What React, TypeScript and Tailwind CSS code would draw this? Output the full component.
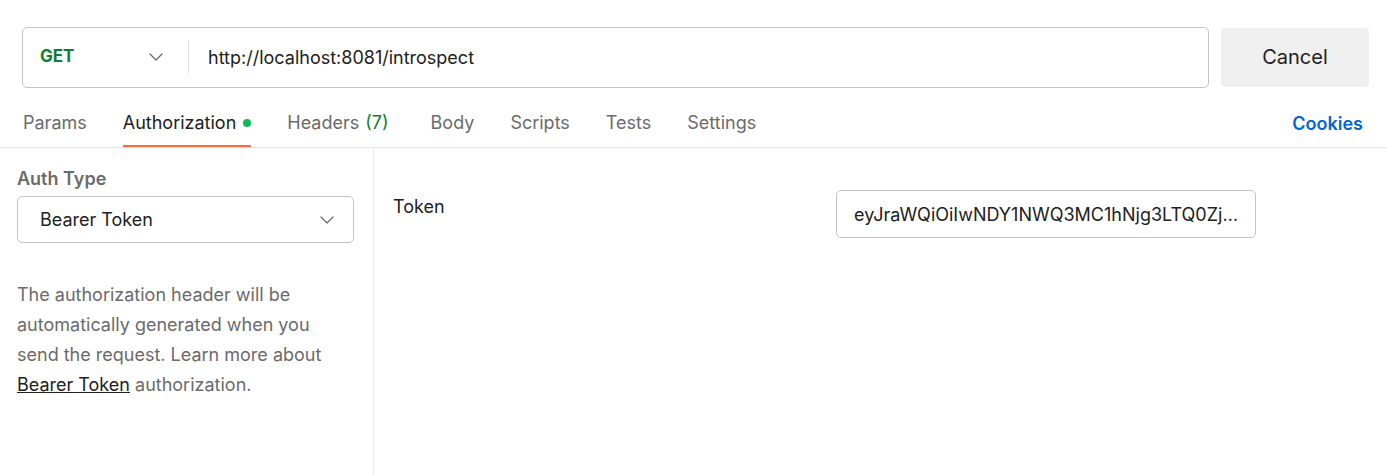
import React from "react";

const Chevron = ({ className = "" }: { className?: string }) => (
  <svg width="14" height="8" viewBox="0 0 14 8" fill="none" className={className}>
    <path d="M1 1l6 6 6-6" stroke="#6b6b6b" strokeWidth="1.3" strokeLinecap="round" strokeLinejoin="round" />
  </svg>
);

export default function App() {
  const tabs = ["Params", "Authorization", "Headers", "Body", "Scripts", "Tests", "Settings"];
  return (
    <div className="w-[1387px] h-[475px] bg-white flex flex-col overflow-hidden" style={{ fontFamily: "Inter, 'Noto Sans', sans-serif" }}>
      <div className="flex items-center gap-[12px] pl-[22px] pr-[18px] pt-[26px] h-[88px]">
        <div className="flex items-center w-[1187px] h-[61px] border border-[#c4c4c4] rounded-[5px] shrink-0">
          <div className="flex items-center justify-between w-[165px] pl-[17px] pr-[25px] h-full">
            <span className="text-[17px] font-bold text-[#0b7f35]">GET</span>
            <Chevron />
          </div>
          <div className="w-px h-[34px] bg-[#e2e2e2]" />
          <div className="pl-[19px] text-[18px] text-[#212121]">http://localhost:8081/introspect</div>
        </div>
        <button className="w-[148px] h-[59px] bg-[#f0f0f0] rounded-[4px] text-[20px] text-[#212121] flex items-center justify-center">
          Cancel
        </button>
      </div>
      <div className="flex items-stretch h-[60px] border-b border-[#e6e6e6] pl-[23px] pr-[24px]">
        <div className="flex items-stretch gap-[36px]">
          {tabs.map((t) => (
            <div
              key={t}
              className={`flex items-center text-[18px] pt-[12px] ${t === "Authorization" ? "text-[#212121] border-b-2 border-[#ff6c37]" : "text-[#6b6b6b] border-b-2 border-transparent"} ${t === "Headers" ? "mr-[6px]" : ""}`}
            >
              {t}
              {t === "Authorization" && <span className="ml-[7px] w-[8px] h-[8px] rounded-full bg-[#0cbb52] inline-block" />}
              {t === "Headers" && <span className="ml-[6px] text-[#0b7f35]">(7)</span>}
            </div>
          ))}
        </div>
        <div className="ml-auto flex items-center text-[18px] font-semibold text-[#0265d2] pt-[12px]">Cookies</div>
      </div>
      <div className="flex flex-1">
        <div className="w-[374px] border-r border-[#ececec] pl-[17px] pr-[19px] pt-[19px] shrink-0">
          <div className="text-[18px] font-semibold text-[#6b6b6b] leading-[24px]">Auth Type</div>
          <div className="mt-[5px] h-[47px] border border-[#c4c4c4] rounded-[5px] flex items-center justify-between pl-[22px] pr-[19px]">
            <span className="text-[18px] text-[#212121]">Bearer Token</span>
            <Chevron />
          </div>
          <p className="mt-[37px] text-[18px] leading-[30px] text-[#6b6b6b]">
            The authorization header will be automatically generated when you send the request. Learn more about{" "}
            <span className="underline text-[#212121]">Bearer Token</span> authorization.
          </p>
        </div>
        <div className="flex-1 pl-[19px] pt-[42px] flex items-start">
          <div className="w-[443px] text-[18px] text-[#212121] leading-[30px] mt-[2px]">Token</div>
          <div className="w-[420px] h-[48px] border border-[#c4c4c4] rounded-[5px] flex items-center pl-[17px] pr-[13px]">
            <span className="text-[18px] text-[#212121] truncate">eyJraWQiOiIwNDY1NWQ3MC1hNjg3LTQ0ZjItODk1MS05ZmQ2</span>
          </div>
        </div>
      </div>
    </div>
  );
}
